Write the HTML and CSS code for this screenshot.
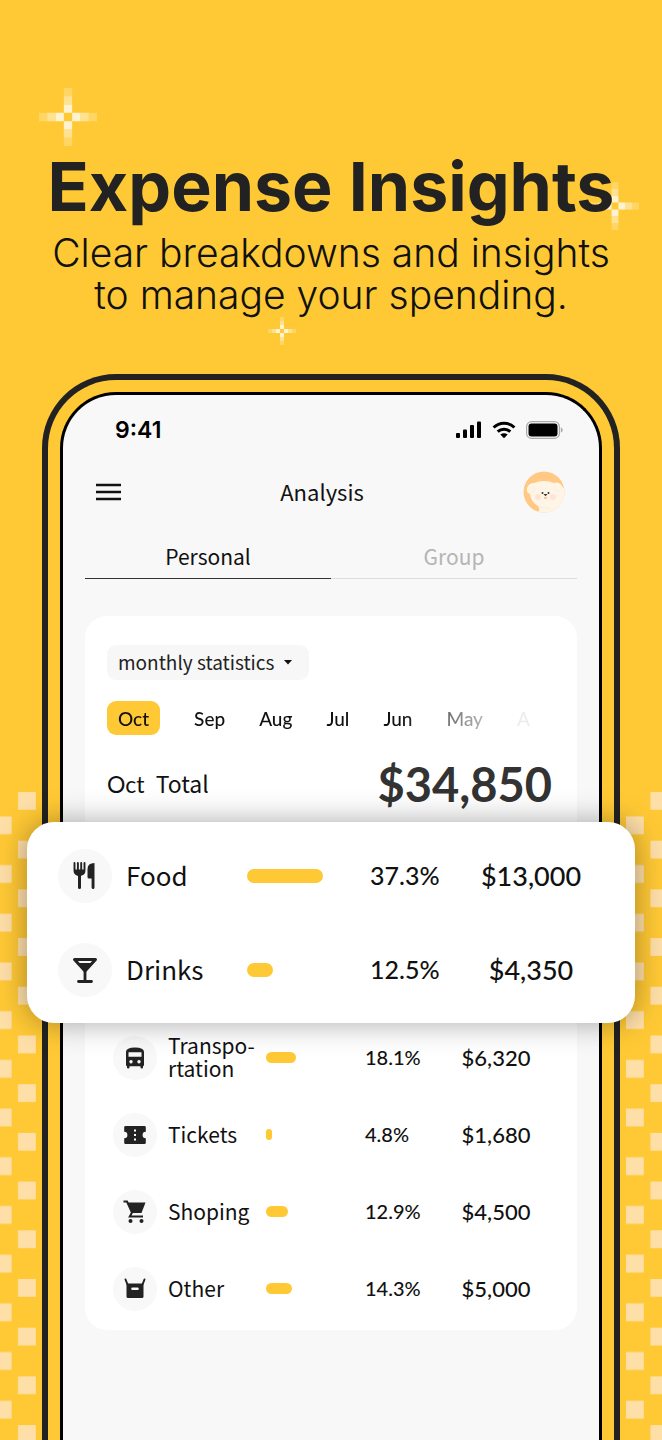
FILE: index.html
```html
<!DOCTYPE html>
<html lang="en">
  <head>
    <meta charset="UTF-8">
    <meta name="viewport" content="width=device-width, initial-scale=1.0">
    <title>Expense Insights</title>
    <link rel="stylesheet" href="styles.css">
  </head>
  <body>
    <!-- shared shapes -->
    <svg class="defs" width="0" height="0" aria-hidden="true">
      <defs>
        <symbol id="sparkle" viewBox="0 0 7 7">
          <g fill="#fff3cf">
            <path d="M3 2h1v1h-1zM3 4h1v1h-1zM2 3h1v1h-1zM4 3h1v1h-1z"/>
            <path opacity=".6" d="M3 1h1v1h-1zM3 5h1v1h-1zM1 3h1v1h-1zM5 3h1v1h-1z"/>
            <path opacity=".3" d="M3 0h1v1h-1zM3 6h1v1h-1zM0 3h1v1h-1zM6 3h1v1h-1z"/>
          </g>
        </symbol>
        <pattern id="checks-a" width="48.7" height="48.7" patternUnits="userSpaceOnUse">
          <rect x="18" y="0" width="17.8" height="17.8" fill="#ffdfa8"/>
          <rect x="0" y="24.4" width="11.6" height="17.8" fill="#ffdfa8"/>
        </pattern>
        <pattern id="checks-b" width="48.7" height="48.7" patternUnits="userSpaceOnUse">
          <rect x="24.4" y="0" width="17.8" height="17.8" fill="#ffdfa8"/>
          <rect x="0" y="24.4" width="17.8" height="17.8" fill="#ffdfa8"/>
        </pattern>
      </defs>
    </svg>

    <main class="promo">
      <svg class="checks checks-left" aria-hidden="true"><rect width="100%" height="100%" fill="url(#checks-a)"/></svg>
      <svg class="checks checks-right" aria-hidden="true"><rect width="100%" height="100%" fill="url(#checks-b)"/></svg>

      <header class="intro">
        <svg class="sparkle sparkle-large" aria-hidden="true"><use href="#sparkle"/></svg>
        <svg class="sparkle sparkle-medium" aria-hidden="true"><use href="#sparkle"/></svg>
        <svg class="sparkle sparkle-small" aria-hidden="true"><use href="#sparkle"/></svg>
        <h1>Expense Insights</h1>
        <p>Clear breakdowns and insights<br>to manage your spending.</p>
      </header>

      <div class="phone">
        <div class="screen">
          <div class="status-bar">
            <span class="time">9:41</span>
            <div class="status-icons">
              <svg width="26" height="18" viewBox="0 0 26 18" aria-hidden="true">
                <rect x="0" y="12" width="4" height="5" rx="1"/>
                <rect x="7" y="8.500" width="4" height="8.500" rx="1"/>
                <rect x="14" y="4" width="4" height="13" rx="1"/>
                <rect x="21" y="0.500" width="4" height="16.500" rx="1"/>
              </svg>
              <svg width="24" height="18" viewBox="0 0 24 18" aria-hidden="true">
                <g fill="none" stroke="#000" stroke-width="3">
                  <path d="M1.600 6.500C7.500 .7 16.500 .7 22.400 6.500"/>
                  <path d="M5.700 10.700C9.300 7.300 14.700 7.300 18.300 10.700"/>
                </g>
                <path d="M12 17.300L8.300 13.600Q12 10.700 15.700 13.600Z"/>
              </svg>
              <svg width="37" height="18" viewBox="0 0 37 18" aria-hidden="true">
                <rect x=".6" y=".6" width="32.800" height="16.800" rx="5" fill="none" stroke="#aaa" stroke-width="1.200"/>
                <rect x="2.500" y="2.500" width="29" height="13" rx="3"/>
                <path d="M34.800 6.300q2 .9 2 2.700t-2 2.700z" fill="#aaa"/>
              </svg>
            </div>
          </div>

          <div class="app-bar">
            <button class="menu" aria-label="Menu">
              <svg width="25" height="18" viewBox="0 0 25 18" aria-hidden="true">
                <path d="M0 2h25M0 9h25M0 16h25" stroke="#111" stroke-width="2.300"/>
              </svg>
            </button>
            <h2>Analysis</h2>
            <button class="avatar" aria-label="Profile">
              <svg width="42" height="42" viewBox="0 0 42 42" aria-hidden="true">
                <clipPath id="face"><circle cx="21" cy="21" r="20.500"/></clipPath>
                <g clip-path="url(#face)">
                  <rect width="42" height="42" fill="#ffc983"/>
                  <path d="M11 12Q21 8 31 12Q36 10 39 15Q42 20 42 16L42 42H14Q18 39 15 35Q8 31 7 23Q3 22 4 17Q6 12 11 12Z" fill="#fff5e6"/>
                  <path d="M7 22Q12 21 11 15M37 21Q32 20 32 15M15 35Q21 38 27 37" fill="none" stroke="#faecdc" stroke-width="1"/>
                  <circle cx="15" cy="26" r="3" fill="#ffe3d6"/>
                  <circle cx="30" cy="26" r="3" fill="#ffe3d6"/>
                  <circle cx="19.500" cy="22" r="1" fill="#3a3029"/>
                  <circle cx="25.500" cy="22" r="1" fill="#3a3029"/>
                  <path d="M20.500 23h4l-2 2.200z" fill="#3a3029"/>
                  <path d="M21 27h3" stroke="#e59a86" stroke-width="1"/>
                </g>
              </svg>
            </button>
          </div>

          <div class="tabs">
            <button class="tab active">Personal</button>
            <button class="tab">Group</button>
          </div>

          <section class="card">
            <div class="summary">
              <div class="picker">
                <select aria-label="Period">
                  <option>monthly statistics</option>
                </select>
                <svg width="8" height="5" viewBox="0 0 8 5" aria-hidden="true"><path d="M0 0h8L4 4.500z" fill="#111"/></svg>
              </div>

              <div class="months">
                <button class="month active">Oct</button>
                <button class="month">Sep</button>
                <button class="month">Aug</button>
                <button class="month">Jul</button>
                <button class="month">Jun</button>
                <button class="month">May</button>
                <button class="month">A</button>
              </div>

              <div class="total">
                <span class="total-label"><span class="total-month">Oct</span> Total</span>
                <strong>$34,850</strong>
              </div>
            </div>

            <div class="highlight">
              <table class="expenses large">
                <tr>
                  <td class="icon"><span class="badge">
                    <svg width="32" height="32" viewBox="0 0 32 32" aria-hidden="true">
                      <path d="M5.500 3v7.500q0 3.500 3.500 4.300h3q3.500-.8 3.500-4.300V3M8.900 3v8M12.200 3v8" fill="none" stroke="#222" stroke-width="1.900" stroke-linecap="round"/>
                      <path d="M5.500 9.500h10q0 5-5 6t-5-6z" fill="#222"/>
                      <path d="M10.500 14v13.500" stroke="#222" stroke-width="3" stroke-linecap="round"/>
                      <path d="M25.500 3v24.500q0 1.500-1.400 1.500t-1.500-1.500V18.500H20q-1.500 0-1.500-1.500V9q0-6 7-6z" fill="#222"/>
                    </svg></span></td>
                  <td class="name">Food</td>
                  <td class="bar"><span style="width: 76px"></span></td>
                  <td class="percent">37.3%</td>
                  <td class="amount">$13,000</td>
                </tr>
                <tr>
                  <td class="icon"><span class="badge">
                    <svg width="32" height="32" viewBox="0 0 32 32" aria-hidden="true">
                      <path d="M5.500 5.500h21L16 17z" fill="none" stroke="#222" stroke-width="3" stroke-linejoin="round"/>
                      <path d="M9 9h14l-7 8z" fill="#222"/>
                      <path d="M16 16v11M9.500 27.500h13" fill="none" stroke="#222" stroke-width="2.800" stroke-linecap="round"/>
                    </svg></span></td>
                  <td class="name">Drinks</td>
                  <td class="bar"><span style="width: 26px"></span></td>
                  <td class="percent">12.5%</td>
                  <td class="amount">$4,350</td>
                </tr>
              </table>
            </div>

            <table class="expenses">
              <tr>
                <td class="icon"><span class="badge">
                  <svg width="24" height="24" viewBox="0 0 24 24" aria-hidden="true">
                    <path fill="#222" fill-rule="evenodd" d="M3 6q0-4.500 9-4.500T21 6v13q0 1-1 1.200V21.500q0 1-1.200 1t-1.300-1V20.300h-11v1.200q0 1-1.300 1T4 21.500V20.200q-1-.2-1-1.200zM5.500 6.300v4.400h13V6.300zM8 14a1.700 1.700 0 1 0 .01 0zM16 14a1.700 1.700 0 1 0 .01 0z"/>
                  </svg></span></td>
                <td class="name">Transpo-<br>rtation</td>
                <td class="bar"><span style="width: 30px"></span></td>
                <td class="percent">18.1%</td>
                <td class="amount">$6,320</td>
              </tr>
              <tr>
                <td class="icon"><span class="badge">
                  <svg width="24" height="24" viewBox="0 0 24 24" aria-hidden="true">
                    <path fill="#222" d="M2.500 3h19q1.300 0 1.300 1.300v4.500a3.200 3.200 0 0 0 0 6.400v4.500q0 1.300-1.300 1.300h-19q-1.300 0-1.300-1.300v-4.500a3.200 3.200 0 0 0 0-6.400V4.300Q1.200 3 2.500 3z"/>
                    <path stroke="#fff" stroke-width="2" stroke-dasharray="2 2.500" d="M12 6.500v13"/>
                  </svg></span></td>
                <td class="name">Tickets</td>
                <td class="bar"><span style="width: 6px"></span></td>
                <td class="percent">4.8%</td>
                <td class="amount">$1,680</td>
              </tr>
              <tr>
                <td class="icon"><span class="badge">
                  <svg width="24" height="24" viewBox="0 0 24 24" aria-hidden="true">
                    <path fill="#222" d="M4.500 2.500h18L18.500 13H8.500z"/>
                    <path d="M.5 1.500H4L9 12.500L6.800 16.500H20" fill="none" stroke="#222" stroke-width="2"/>
                    <circle cx="7.500" cy="21" r="2" fill="#222"/>
                    <circle cx="18.500" cy="21" r="2" fill="#222"/>
                  </svg></span></td>
                <td class="name">Shoping</td>
                <td class="bar"><span style="width: 22px"></span></td>
                <td class="percent">12.9%</td>
                <td class="amount">$4,500</td>
              </tr>
              <tr>
                <td class="icon"><span class="badge">
                  <svg width="24" height="24" viewBox="0 0 24 24" aria-hidden="true">
                    <path d="M2.500 2.500L4.500 7.500M21.500 2.500L19.500 7.500" stroke="#222" stroke-width="2" stroke-linecap="round"/>
                    <path fill="#222" fill-rule="evenodd" d="M3.500 6.500h17V19.500q0 1.500-1.500 1.500H5q-1.500 0-1.500-1.500zM9.500 10.500a1.200 1.200 0 0 0 0 2.600h5a1.200 1.200 0 0 0 0-2.600z"/>
                  </svg></span></td>
                <td class="name">Other</td>
                <td class="bar"><span style="width: 26px"></span></td>
                <td class="percent">14.3%</td>
                <td class="amount">$5,000</td>
              </tr>
            </table>
          </section>
        </div>
      </div>
    </main>
  </body>
</html>
```
FILE: styles.css
```css
* {
  box-sizing: border-box;
}

body {
  margin: 0;
  background-color: #ffc935;
  color: #111;
  font-family: "Noto Sans CJK TC", "Noto Sans", sans-serif;
}

button,
select {
  padding: 0;
  border: none;
  background: none;
  color: inherit;
  font: inherit;
  cursor: pointer;
}

svg {
  display: block;
}

.defs {
  position: absolute;
}

.promo {
  position: relative;
  display: flex;
  flex-direction: column;
  min-height: 100vh;
  overflow: hidden;
}

/* background decoration */
.checks {
  position: absolute;
  top: 792px;
  height: calc(100% - 792px);
}

.checks-left {
  left: 0;
  width: 36px;
}

.checks-right {
  right: -6px;
  width: 42px;
}

.sparkle {
  position: absolute;
}

.sparkle-large {
  top: 88px;
  left: 39px;
  width: 58px;
  height: 58px;
}

.sparkle-medium {
  top: 182px;
  right: 23px;
  width: 48px;
  height: 48px;
}

.sparkle-small {
  top: 317px;
  left: 268px;
  width: 28px;
  height: 28px;
}

/* headline */
.intro {
  padding: 146px 0 58px;
  text-align: center;
}

.intro h1 {
  position: relative;
  margin: 0 0 6px;
  color: #222;
  font-family: Inter, sans-serif;
  font-size: 68px;
  font-weight: 700;
  line-height: 80px;
}

.intro p {
  margin: 0;
  font-family: Inter, sans-serif;
  font-size: 39px;
  font-weight: 300;
  line-height: 42px;
}

/* phone */
.phone {
  position: relative;
  display: flex;
  flex: 1;
  margin: 0 42px;
  padding: 12px 12px 0;
  border: 6px solid #222;
  border-bottom: none;
  border-radius: 74px 74px 0 0;
}

.screen {
  flex: 1;
  border: 3px solid #000;
  border-bottom: none;
  border-radius: 56px 56px 0 0;
  background-color: #f8f8f8;
}

.status-bar {
  display: flex;
  align-items: center;
  justify-content: space-between;
  height: 70px;
  padding: 0 36px 0 52px;
}

.time {
  color: #000;
  font-family: Inter, sans-serif;
  font-size: 23px;
  font-weight: 600;
}

.status-icons {
  display: flex;
  gap: 10px;
}

.app-bar {
  display: flex;
  align-items: center;
  justify-content: space-between;
  height: 54px;
  padding: 0 34px 0 33px;
}

.app-bar h2 {
  margin: 0;
  padding-bottom: 2px;
  font-size: 22px;
  font-weight: 400;
}

.tabs {
  display: flex;
  margin: 0 22px 37px;
}

.tab {
  flex: 1;
  height: 60px;
  padding-top: 14px;
  border-bottom: 1px solid #ddd;
  color: #b5b5b5;
  font-size: 21px;
}

.tab.active {
  border-color: #333;
  color: #111;
}

/* statistics card */
.card {
  margin: 0 22px;
  padding: 29px 0 3px;
  border-radius: 22px;
  background-color: #fff;
}

.summary {
  padding: 0 25px 0 22px;
}

.picker {
  position: relative;
  width: fit-content;
}

.picker select {
  display: block;
  height: 35px;
  padding: 0 34px 2px 11px;
  border-radius: 9px;
  background-color: #f7f7f7;
  color: #222;
  font-size: 19px;
  appearance: none;
}

.picker svg {
  position: absolute;
  top: 15px;
  right: 17px;
  pointer-events: none;
}

.months {
  display: flex;
  gap: 34px;
  margin: 21px 0 11px;
  overflow: hidden;
  mask-image: linear-gradient(to right, #000 66%, rgba(0, 0, 0, 0.4) 82%, rgba(0, 0, 0, 0.08) 92%);
}

.month {
  height: 34px;
  font-family: Lato, sans-serif;
  font-size: 19px;
  font-weight: 500;
}

.month.active {
  padding: 0 11px;
  border-radius: 9px;
  background-color: #ffc935;
}

.total {
  display: flex;
  align-items: center;
  justify-content: space-between;
  height: 76px;
}

.total-label {
  padding-bottom: 3px;
  font-size: 23px;
}

.total-month {
  margin-right: 6px;
  font-family: Lato, sans-serif;
}

.total strong {
  color: #333;
  font-family: Lato, sans-serif;
  font-size: 47px;
  font-weight: 700;
}

/* wider than the phone, so it stands out over both edges */
.highlight {
  position: relative;
  z-index: 1;
  margin: 0 -58px -4px;
  padding: 7px 0 6px;
  border-radius: 27px;
  background-color: #fff;
  box-shadow: 0 0 30px rgba(0, 0, 0, 0.35);
}

/* expense tables */
.expenses {
  width: 100%;
  border-collapse: collapse;
  table-layout: fixed;
}

.expenses tr {
  height: 77px;
}

.expenses td {
  padding: 0;
  vertical-align: middle;
}

.expenses .icon {
  width: 83px;
  padding-left: 28px;
}

.badge {
  display: flex;
  align-items: center;
  justify-content: center;
  width: 44px;
  height: 44px;
  border-radius: 50%;
  background-color: #f8f8f8;
}

.expenses .name {
  width: 98px;
  padding-bottom: 1px;
  font-size: 21px;
  line-height: 23px;
}

.expenses .bar {
  width: 99px;
}

.bar span {
  display: block;
  height: 11px;
  border-radius: 7px;
  background-color: #ffc935;
}

.expenses .percent,
.expenses .amount {
  font-family: Lato, sans-serif;
  font-size: 22px;
  font-weight: 500;
}

.expenses .percent {
  width: 81px;
  padding-bottom: 1px;
  font-size: 20px;
}

.expenses .amount {
  padding-right: 31px;
  text-align: center;
}

.large tr {
  height: 94px;
}

.large .icon {
  width: 99px;
  padding-left: 31px;
}

.large .badge {
  width: 54px;
  height: 54px;
}

.large .name {
  width: 121px;
  padding-bottom: 3px;
  font-size: 26px;
}

.large .bar {
  width: 123px;
}

.large .bar span {
  height: 14px;
}

.large .percent,
.large .amount {
  padding-bottom: 2px;
  font-size: 27px;
}

.large .percent {
  width: 100px;
  font-size: 25px;
}

.large .amount {
  padding-right: 43px;
}
```
